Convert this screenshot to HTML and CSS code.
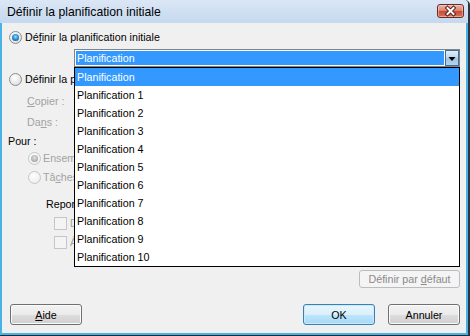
FILE: index.html
```html
<!DOCTYPE html>
<html lang="fr">
<head>
<meta charset="utf-8">
<title>Définir la planification initiale</title>
<link rel="stylesheet" href="styles.css">
</head>
<body>
<div class="window">
  <div class="titlebar">
    <span class="title">Définir la planification initiale</span>
    <span class="close">
      <svg width="25" height="12" viewBox="0 0 25 12">
        <path d="M9.5 3 L15.5 9 M15.5 3 L9.5 9" stroke="#4a1510" stroke-width="3.8" stroke-linecap="square" fill="none"/>
        <path d="M9.5 3 L15.5 9 M15.5 3 L9.5 9" stroke="#ffffff" stroke-width="2" stroke-linecap="square" fill="none"/>
      </svg>
    </span>
  </div>
  <div class="frame">
    <div class="client">
      <div class="row opt-main"><span class="radio on"></span><span>Dé<u>f</u>inir la planification initiale</span></div>
      <div class="combo-wrap">
        <div class="combo">
          <span class="combo-value">Planification</span>
          <span class="combo-btn">
            <svg width="12" height="14" viewBox="0 0 12 14"><path d="M2.5 6 H9.5 L6 10 Z" fill="#000"/></svg>
          </span>
        </div>
        <ul class="dropdown">
          <li class="sel">Planification</li>
          <li>Planification 1</li>
          <li>Planification 2</li>
          <li>Planification 3</li>
          <li>Planification 4</li>
          <li>Planification 5</li>
          <li>Planification 6</li>
          <li>Planification 7</li>
          <li>Planification 8</li>
          <li>Planification 9</li>
          <li>Planification 10</li>
        </ul>
      </div>
      <div class="row under opt-alt"><span class="radio"></span><span class="lbl">Définir la planification provisoire</span></div>
      <div class="row under copier dis"><span class="lbl"><u>C</u>opier :</span></div>
      <div class="row under dans dis"><span class="lbl">Da<u>n</u>s :</span></div>
      <div class="row pour"><span>Pour :</span></div>
      <div class="row under ensem dis"><span class="radio on off"></span><span class="lbl">Ensemble du projet</span></div>
      <div class="row under taches dis"><span class="radio off"></span><span class="lbl">Tâ<u>c</u>hes sélectionnées</span></div>
      <div class="row under repor"><span class="lbl">Reporter les valeurs de référence :</span></div>
      <div class="row under cb cb1 dis"><span class="check"></span><span class="lbl">Dans tous les récapitulatifs</span></div>
      <div class="row under cb cb2 dis"><span class="check"></span><span class="lbl">À partir des sous-tâches</span></div>
      <div class="defrow"><span class="btn btn-def disabled"><span>Définir par <u>d</u>éfaut</span></span></div>
      <div class="btnrow">
        <span class="btn"><span><u>A</u>ide</span></span>
        <span class="spacer"></span>
        <span class="btn default"><span>OK</span></span>
        <span class="btn"><span>Annuler</span></span>
      </div>
    </div>
  </div>
</div>
</body>
</html>
```
FILE: styles.css
```css
* { box-sizing: border-box; }
html, body { margin: 0; padding: 0; }
body {
  width: 470px;
  height: 336px;
  overflow: hidden;
  background: #f0f0f0;
  font-family: "Liberation Sans", Arial, sans-serif;
  font-size: 10.7px;
  color: #000;
}
u { text-decoration: underline; text-underline-offset: 1px; }

.window {
  width: 470px;
  height: 336px;
  display: flex;
  flex-direction: column;
  background: #c8daef;
  border-right: 2px solid #2b3440;
  border-bottom: 1px solid #1e2630;
  border-top-right-radius: 5px;
}

.titlebar {
  height: 23px;
  flex: none;
  display: flex;
  align-items: center;
  padding: 0 4px 0 7px;
  background: linear-gradient(#dbe7f5, #c4d8ef);
  border-top-right-radius: 4px;
}
.title {
  flex: 1;
  font-size: 12.2px;
  line-height: 23px;
  padding-top: 1px;
  color: #000;
}
.close {
  width: 27px;
  height: 14px;
  display: flex;
  align-items: center;
  justify-content: center;
  border: 1px solid #6a2a22;
  border-radius: 3px;
  background: linear-gradient(#eab3a8 0%, #dc8877 45%, #c94a33 52%, #d4735c 100%);
  box-shadow: inset 0 0 0 1px rgba(255, 220, 210, 0.5);
  margin-top: -1px;
}

.frame {
  flex: 1;
  display: flex;
  border-left: 2px solid #47b2e6;
  border-right: 2px solid #47b2e6;
  border-bottom: 2px solid #47b2e6;
}
.client {
  flex: 1;
  display: flex;
  flex-direction: column;
  background: #f0f0f0;
  padding-top: 7px;
}

.row {
  height: 14px;
  line-height: 14px;
  display: flex;
  align-items: center;
  white-space: nowrap;
}
/* rows whose labels run under the open drop-down list */
.row.under { width: 72px; overflow: hidden; }
.lbl { min-width: 0; overflow: hidden; }
.dis { color: #a2a2a2; }

.opt-main { padding-left: 7px; gap: 3px; }
.opt-alt { margin-top: 5px; padding-left: 7px; gap: 3px; }
.copier { margin-top: 8px; padding-left: 25px; }
.dans { margin-top: 7px; padding-left: 25px; }
.pour { margin-top: 5px; padding-left: 6px; }
.ensem { margin-top: 3px; padding-left: 26px; gap: 2px; }
.taches { margin-top: 5px; padding-left: 26px; gap: 2px; }
.repor { margin-top: 13px; padding-left: 44px; color: #000; }
.cb { padding-left: 52px; gap: 3px; }
.cb1 { margin-top: 5px; }
.cb2 { margin-top: 5px; }

.radio {
  position: relative;
  flex: none;
  width: 13px;
  height: 13px;
  border-radius: 50%;
  border: 1px solid #8a8d91;
  background: radial-gradient(circle at 40% 35%, #ffffff 0%, #e9e9e9 55%, #cfd1d3 100%);
}
.radio.on::after {
  content: "";
  position: absolute;
  left: 2px;
  top: 2px;
  width: 7px;
  height: 7px;
  border-radius: 50%;
  background: radial-gradient(circle at 50% 40%, #8fe4ff 0%, #2d93dc 45%, #143c74 100%);
}
.radio.off {
  border-color: #c5c7c9;
  background: radial-gradient(circle at 40% 35%, #ffffff 0%, #f2f2f2 60%, #e2e3e4 100%);
}
.radio.on.off::after {
  background: radial-gradient(circle at 50% 40%, #e4e4e4 0%, #b9b9b9 50%, #8f8f8f 100%);
}
.check {
  flex: none;
  width: 13px;
  height: 13px;
  border: 1px solid #c4c6c8;
  background: #f4f4f4;
}

.combo-wrap {
  position: relative;
  margin: 5px 6px 0 72px;
  height: 18px;
}
.combo {
  height: 18px;
  display: flex;
  border: 1px solid #7f8489;
  background: #ffffff;
}
.combo-value {
  flex: 1;
  border: 1px solid #ffffff;
  background: #3399ff;
  color: #ffffff;
  padding-left: 1px;
  line-height: 14px;
}
.combo-btn {
  flex: none;
  width: 14px;
  display: flex;
  align-items: center;
  justify-content: center;
  border: 1px solid #3d6f99;
  background: linear-gradient(#e1eef8 0%, #bcd6ec 50%, #9fc3e2 51%, #b7d3ea 100%);
}
.dropdown {
  position: absolute;
  left: 0;
  top: 18px;
  width: 386px;
  margin: 0;
  padding: 0;
  list-style: none;
  border: 1px solid #000000;
  background: #ffffff;
  z-index: 5;
}
.dropdown li {
  height: 18px;
  line-height: 18px;
  padding-left: 2px;
  color: #000;
}
.dropdown li.sel {
  background: #3399ff;
  color: #ffffff;
}

.btn {
  flex: none;
  width: 72px;
  height: 21px;
  display: flex;
  align-items: center;
  justify-content: center;
  border: 1px solid #707070;
  border-radius: 3px;
  background: linear-gradient(#f2f2f2 0%, #ebebeb 50%, #dddddd 51%, #cfcfcf 100%);
  box-shadow: inset 0 0 0 1px #fbfbfb;
  color: #000;
  white-space: nowrap;
}
.btn.default {
  border-color: #3c7fb1;
  background: linear-gradient(#eaf6fd 0%, #d9f0fc 50%, #bee6fd 51%, #a7d9f5 100%);
  box-shadow: inset 0 0 0 1px #c4ecfd;
}
.btn.disabled {
  border-color: #b9bdc0;
  background: #f4f4f4;
  box-shadow: none;
  color: #8a8a8a;
}
.defrow {
  margin-top: 21px;
  display: flex;
  justify-content: flex-end;
  padding-right: 6px;
}
.btn-def {
  width: 101px;
  height: 18px;
}
.btnrow {
  margin-top: 16px;
  display: flex;
  gap: 13px;
  padding: 0 6px 0 8px;
}
.spacer { flex: 1; }
```
